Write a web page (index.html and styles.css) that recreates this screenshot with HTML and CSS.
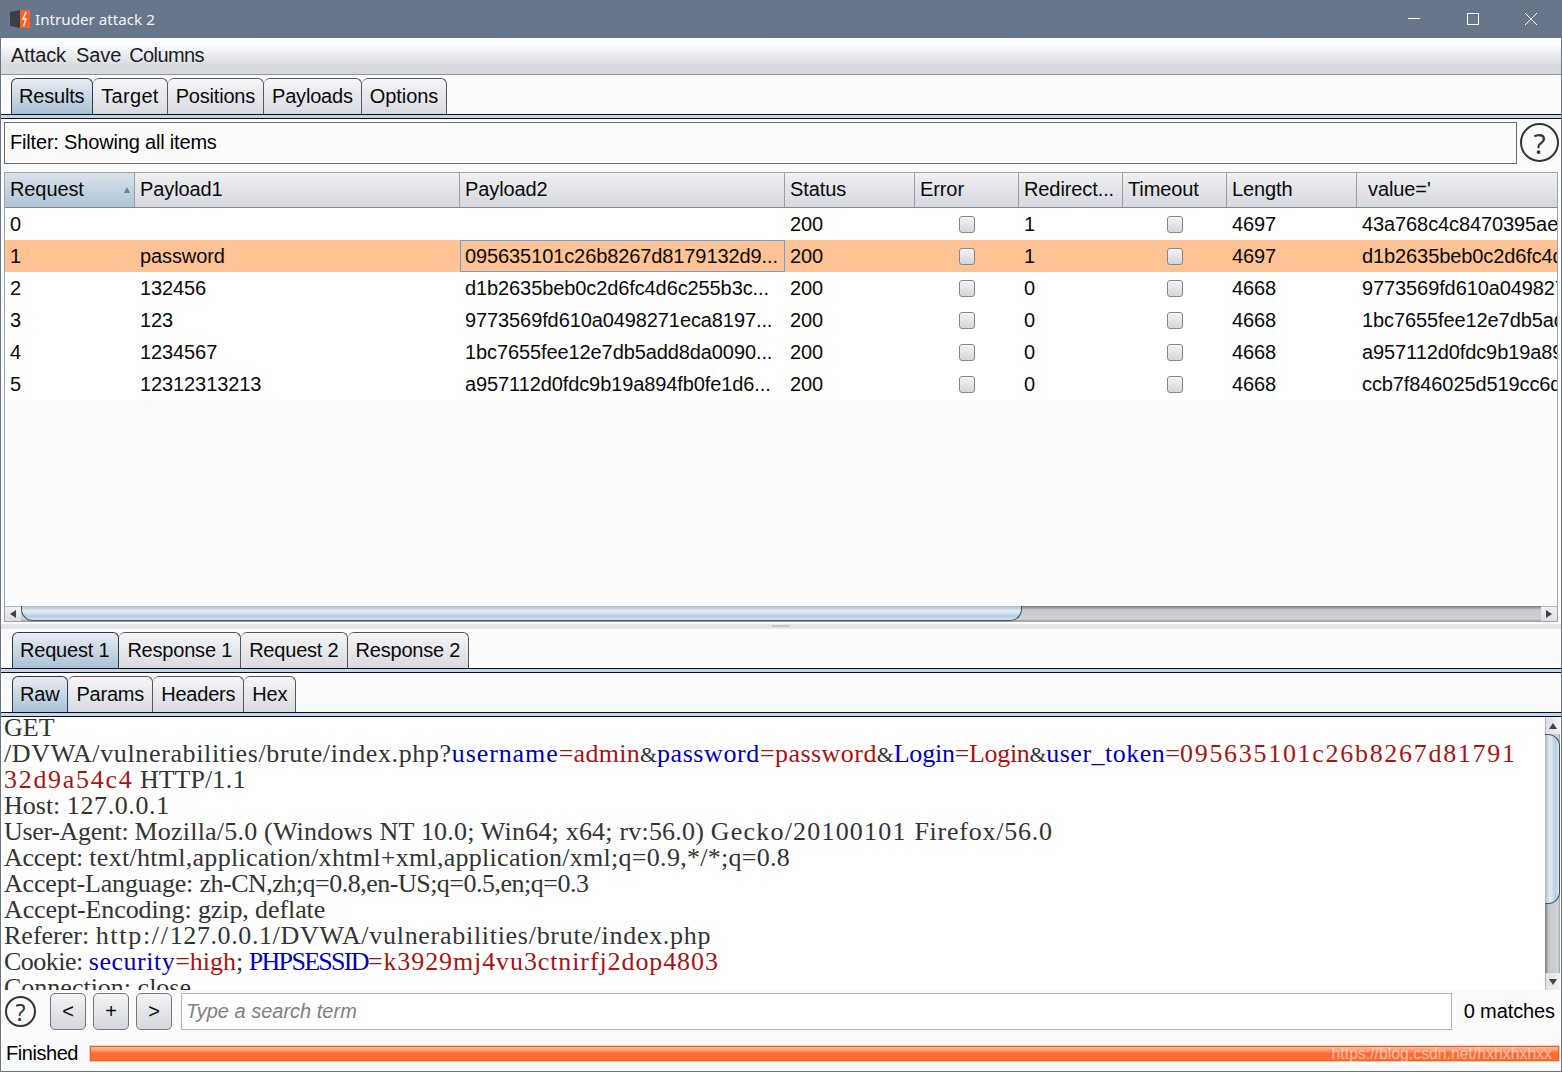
FILE: index.html
```html
<!DOCTYPE html>
<html lang="en">
<head>
<meta charset="utf-8">
<title>Intruder attack 2</title>
<link rel="stylesheet" href="styles.css">
</head>
<body>
<div class="window">
  <header class="titlebar">
    <svg class="logo" width="21" height="20" viewBox="0 0 21 20"><path d="M0 3 L10 1 V19 L0 17Z" fill="#3e3e40"/><path d="M10 1 H20 V19 H10Z" fill="#f4622a"/><path d="M16 3 L13 10 H16 L13.5 17" fill="none" stroke="#fff" stroke-width="1.3"/></svg>
    <span class="title">Intruder attack 2</span>
    <div class="winbtns">
      <svg width="14" height="14" viewBox="0 0 14 14"><path d="M1 6.5 H13" stroke="#fff" fill="none"/></svg>
      <svg width="14" height="14" viewBox="0 0 14 14"><rect x="1.5" y="1.5" width="11" height="11" stroke="#fff" fill="none"/></svg>
      <svg width="14" height="14" viewBox="0 0 14 14"><path d="M1 1 L13 13 M13 1 L1 13" stroke="#fff" fill="none"/></svg>
    </div>
  </header>
  <nav class="menubar"><span>Attack</span><span>Save</span><span class="menu-cols">Columns</span></nav>
  <div class="tabs tabs-main">
    <div class="tab active">Results</div><div class="tab t-target">Target</div><div class="tab">Positions</div><div class="tab">Payloads</div><div class="tab t-options">Options</div>
  </div>
  <div class="tabline"></div>
  <div class="filter-row">
    <div class="filter">Filter: Showing all items</div>
    <div class="help help-lg">?</div>
  </div>
  <section class="table">
    <div class="row head">
      <div class="c c1 sorted">Request<i class="sort"></i></div><div class="c c2">Payload1</div><div class="c c3">Payload2</div><div class="c c4">Status</div><div class="c c5">Error</div><div class="c c6">Redirect...</div><div class="c c7">Timeout</div><div class="c c8">Length</div><div class="c c9 val">value='</div>
    </div>
    <div class="row">
      <div class="c c1">0</div><div class="c c2"></div><div class="c c3"></div><div class="c c4">200</div><div class="c c5 ck"><b></b></div><div class="c c6">1</div><div class="c c7 ck"><b></b></div><div class="c c8">4697</div><div class="c c9">43a768c4c8470395ae</div>
    </div>
    <div class="row sel">
      <div class="c c1">1</div><div class="c c2">password</div><div class="c c3 focus">095635101c26b8267d8179132d9...</div><div class="c c4">200</div><div class="c c5 ck"><b></b></div><div class="c c6">1</div><div class="c c7 ck"><b></b></div><div class="c c8">4697</div><div class="c c9">d1b2635beb0c2d6fc4d6c</div>
    </div>
    <div class="row">
      <div class="c c1">2</div><div class="c c2">132456</div><div class="c c3">d1b2635beb0c2d6fc4d6c255b3c...</div><div class="c c4">200</div><div class="c c5 ck"><b></b></div><div class="c c6">0</div><div class="c c7 ck"><b></b></div><div class="c c8">4668</div><div class="c c9">9773569fd610a0498271</div>
    </div>
    <div class="row">
      <div class="c c1">3</div><div class="c c2">123</div><div class="c c3">9773569fd610a0498271eca8197...</div><div class="c c4">200</div><div class="c c5 ck"><b></b></div><div class="c c6">0</div><div class="c c7 ck"><b></b></div><div class="c c8">4668</div><div class="c c9">1bc7655fee12e7db5add</div>
    </div>
    <div class="row">
      <div class="c c1">4</div><div class="c c2">1234567</div><div class="c c3">1bc7655fee12e7db5add8da0090...</div><div class="c c4">200</div><div class="c c5 ck"><b></b></div><div class="c c6">0</div><div class="c c7 ck"><b></b></div><div class="c c8">4668</div><div class="c c9">a957112d0fdc9b19a894</div>
    </div>
    <div class="row">
      <div class="c c1">5</div><div class="c c2">12312313213</div><div class="c c3">a957112d0fdc9b19a894fb0fe1d6...</div><div class="c c4">200</div><div class="c c5 ck"><b></b></div><div class="c c6">0</div><div class="c c7 ck"><b></b></div><div class="c c8">4668</div><div class="c c9">ccb7f846025d519cc6d2</div>
    </div>
    <div class="table-fill"></div>
    <div class="hscroll">
      <div class="arrow-box"><i class="tri-left"></i></div>
      <div class="htrack"><div class="hthumb"></div></div>
      <div class="arrow-box"><i class="tri-right"></i></div>
    </div>
  </section>
  <div class="splitter"><i></i></div>
  <div class="tabs tabs-req">
    <div class="tab active">Request 1</div><div class="tab">Response 1</div><div class="tab">Request 2</div><div class="tab">Response 2</div>
  </div>
  <div class="tabline"></div>
  <div class="tabs tabs-raw">
    <div class="tab active">Raw</div><div class="tab">Params</div><div class="tab">Headers</div><div class="tab">Hex</div>
  </div>
  <div class="tabline"></div>
  <section class="message">
    <div class="msg-text"><div class="ln">GET</div><div class="ln"><span class="path">/DVWA/vulnerabilities/brute/index.php?</span><span class="k n1">username</span><span class="v n2">=admin</span><span class="amp">&amp;</span><span class="k n3">password</span><span class="v n4">=password</span><span class="amp">&amp;</span><span class="k n5">Login</span><span class="v n6">=Login</span><span class="amp">&amp;</span><span class="k n7">user_token</span><span class="v">=<span class="d">095635101c26b8267d81791</span></span></div><div class="ln"><span class="v d">32d9a54c4</span> HTTP/<span class="ip">1.1</span></div><div class="ln">Host: <span class="ip">127.0.0.1</span></div><div class="ln"><span class="a1">User-Agent: </span><span class="a2">Mozilla/5.0 (Windows NT 10.0; Win64; x64; rv:56.0) </span><span class="a3">Gecko/20100101 </span><span class="a4">Firefox/56.0</span></div><div class="ln"><span class="b1">Accept: </span><span class="b2">text/html,application/xhtml+xml,application/xml;q=0.9,*/*;q=0.8</span></div><div class="ln"><span class="c1t">Accept-Language: </span><span class="c2t">zh-CN,zh;q=0.8,en-US;q=0.5,en;q=0.3</span></div><div class="ln e1">Accept-Encoding: gzip, deflate</div><div class="ln">Referer: <span class="proto">http://</span><span class="ip">127.0.0.1</span><span class="path2">/DVWA/vulnerabilities/brute/index.php</span></div><div class="ln"><span class="f1">Cookie: </span><span class="k f2">security</span><span class="v">=high</span><span class="f1">; </span><span class="k f3">PHPSESSID</span><span class="v f4">=k3929mj4vu3ctnirfj2dop4803</span></div><div class="ln">Connection: close</div></div>
    <div class="vscroll">
      <div class="arrow-box v"><i class="tri-up"></i></div>
      <div class="vtrack"><div class="vthumb"></div></div>
      <div class="arrow-box v"><i class="tri-down"></i></div>
    </div>
  </section>
  <div class="searchbar">
    <div class="help help-sm">?</div>
    <button class="btn">&lt;</button><button class="btn">+</button><button class="btn">&gt;</button>
    <div class="search">Type a search term</div>
    <div class="matches">0 matches</div>
  </div>
  <footer class="status">
    <span class="finished">Finished</span>
    <div class="progress"><span class="wm">https://blog.csdn.net/hxhxhxhxx</span></div>
  </footer>
</div>
</body>
</html>
```
FILE: styles.css
```css
* { box-sizing: border-box; }
html, body { margin: 0; padding: 0; background: #fbfbfc; }
body { font-family: "Liberation Sans", Arial, sans-serif; font-size: 20px; letter-spacing: -.1px; color: #000; overflow: hidden; }
.window { width: 1562px; height: 1072px; display: flex; flex-direction: column; border: 1px solid #67768a; border-top: 0; background: #fbfbfc; overflow: hidden; }

.titlebar { height: 38px; flex: none; margin: 0 -1px; background: #67768a; color: #f2f4f6; display: flex; align-items: center; padding-left: 10px; letter-spacing: 0; }
.logo { flex: none; }
.title { font-family: "Noto Sans", sans-serif; font-size: 15.2px; margin-left: 4px; }
.winbtns { margin-left: auto; display: flex; gap: 44.5px; padding-right: 24px; }

.menubar { height: 37px; flex: none; background: linear-gradient(#fcfcfd 0%, #fcfcfd 20%, #d8dbe0 75%, #d6d9de 100%); border-bottom: 1px solid #8f939a; display: flex; align-items: center; gap: 10px; padding: 0 0 2px 10px; color: #1c1c1c; }
.menu-cols { margin-left: -2px; letter-spacing: -.6px; }

.tabs { display: flex; flex: none; align-items: flex-end; letter-spacing: -.2px; }
.tabs-main { height: 39px; padding-left: 10px; }
.tabs-req { height: 36px; padding-left: 11px; margin-top: 3px; }
.tabs-raw { height: 36px; padding-left: 11px; margin-top: 3px; }
.tab { height: 36px; padding: 0 8px; line-height: 35px; border: 1px solid #54575e; border-bottom: 0; border-left: 0; border-radius: 6px 6px 0 0; background: linear-gradient(#f6f6f8, #d8dae0); white-space: nowrap; color: #0a0a0a; }
.tab:first-child { border-left: 1px solid #54575e; padding-left: 7px; }
.tabs-req .tab:first-child { padding-right: 9px; }
.tab.active { background: linear-gradient(#e9edf2, #a9c2d6); border-color: #2b3a4c; }
.t-target { letter-spacing: .3px; }
.t-options { letter-spacing: -.05px; }

.tabline { height: 5px; flex: none; background: #c4d5e6; border-top: 1px solid #0a0f1c; border-bottom: 1px solid #0a0f1c; }

.filter-row { display: flex; flex: none; height: 45px; padding: 3px 2px 0 3px; gap: 3px; }
.filter { flex: 1; height: 42px; border: 1px solid #6b6b6b; line-height: 38px; padding-left: 5px; letter-spacing: -.18px; }
.help { border: 2px solid #333; border-radius: 50%; display: flex; align-items: center; justify-content: center; color: #333; flex: none; font-family: "Noto Sans", sans-serif; letter-spacing: 0; }
.help-lg { width: 39px; height: 39px; font-size: 28px; margin-top: 1px; }
.help-sm { width: 31px; height: 31px; font-size: 23px; margin-top: 3px; margin-right: 7px; }

.table { height: 450px; margin: 8px 3px 0 3px; border: 1px solid #a0a2a8; flex: none; display: flex; flex-direction: column; background: #fff; overflow: hidden; }
.row { display: flex; height: 32px; flex: none; background: #fff; }
.row.head { height: 35px; background: linear-gradient(#f0f0f3, #d5d8de); border-bottom: 1px solid #85888f; }
.row.sel { background: #ffc295; }
.c { padding-left: 5px; line-height: 32px; white-space: nowrap; overflow: hidden; flex: none; color: #0a0a0a; }
.head .c { border-right: 1px solid #9a9da4; position: relative; }
.head .c:last-child { border-right: 0; }
.sorted { background: linear-gradient(#d9e2ea, #adc4d6); }
.val { padding-left: 11px; }
.c1 { width: 130px; } .c2 { width: 325px; } .c3 { width: 325px; } .c4 { width: 130px; } .c5 { width: 104px; } .c6 { width: 104px; } .c7 { width: 104px; } .c8 { width: 130px; } .c9 { flex: 1; }
.focus { border: 1px solid #6f9fd0; line-height: 30px; padding-left: 4px; }
.sort { position: absolute; right: 4px; top: 14px; border-left: 3.5px solid transparent; border-right: 3.5px solid transparent; border-bottom: 6px solid #5884ad; }
.ck { display: flex; align-items: center; justify-content: center; padding: 0; }
.ck b { display: block; width: 16px; height: 17px; border: 1px solid #85888f; border-radius: 3px; background: linear-gradient(#f4f4f6, #d3d6dc); }
.table-fill { flex: 1; background: #fbfbfc; }
.hscroll { height: 15px; flex: none; display: flex; background: #fbfbfc; }
.arrow-box { width: 16px; height: 100%; flex: none; background: linear-gradient(#f2f2f4, #dcdee2); border-top: 1px solid #aab6c4; display: flex; align-items: center; justify-content: center; }
.htrack { flex: 1; background: linear-gradient(#77797e, #c6c8cd 25%, #cfd1d5 88%, #9a9ca2); }
.hthumb { width: 1001px; height: 100%; background: linear-gradient(#a9b9ca, #e6edf4 35%, #b5cfe5 75%, #dbe8f3); border: 1px solid #3f5164; border-top: 0; border-radius: 0 0 12px 12px; }
.tri-left, .tri-right, .tri-up, .tri-down { display: block; width: 0; height: 0; }
.tri-left { border-top: 4px solid transparent; border-bottom: 4px solid transparent; border-right: 6px solid #444; }
.tri-right { border-top: 4px solid transparent; border-bottom: 4px solid transparent; border-left: 6px solid #444; }
.tri-up { border-left: 4px solid transparent; border-right: 4px solid transparent; border-bottom: 6px solid #444; }
.tri-down { border-left: 4px solid transparent; border-right: 4px solid transparent; border-top: 6px solid #444; }
.splitter { height: 5px; flex: none; margin-top: 2px; background: #e4e5e9; display: flex; justify-content: center; }
.splitter i { width: 18px; height: 2px; margin-top: 1px; background: #c4c6cb; }

.message { height: 273px; flex: none; display: flex; background: #fff; overflow: hidden; }
.msg-text { flex: 1; padding: 0 0 0 3px; font-family: "Liberation Serif", serif; font-size: 26px; letter-spacing: 0; color: #333; min-width: 0; margin-top: -2px; }
.ln { height: 26px; line-height: 26px; white-space: nowrap; }
.k { color: #0000c0; }
.v { color: #a81414; }
.d { letter-spacing: 1.7px; }
.path { letter-spacing: .63px; }
.path2 { letter-spacing: .71px; }
.amp { font-size: 22px; letter-spacing: -.3px; }
.n1 { letter-spacing: .9px; }
.n2 { letter-spacing: .3px; }
.n3 { letter-spacing: .6px; }
.n4 { letter-spacing: .45px; }
.n5 { letter-spacing: -.2px; }
.n6 { letter-spacing: -.35px; }
.n7 { letter-spacing: .5px; }
.ip { letter-spacing: .6px; }
.proto { letter-spacing: 1.7px; }
.a1 { letter-spacing: -.33px; }
.a2 { letter-spacing: .2px; }
.a3 { letter-spacing: 1.2px; }
.a4 { letter-spacing: .75px; }
.b1 { letter-spacing: -.25px; }
.b2 { letter-spacing: .28px; }
.c1t { letter-spacing: -.18px; }
.c2t { letter-spacing: -.5px; }
.e1 { letter-spacing: -.1px; }
.f1 { letter-spacing: -.5px; }
.f2 { letter-spacing: .5px; }
.f3 { letter-spacing: -1.7px; }
.f4 { letter-spacing: .9px; }

.vscroll { width: 15px; flex: none; display: flex; flex-direction: column; background: linear-gradient(90deg, #77797e, #c6c8cd 25%, #cfd1d5 88%, #9a9ca2); margin-right: 1px; }
.arrow-box.v { width: 15px; height: 17px; background: linear-gradient(90deg, #dfe0e3, #f2f2f4); border-top: 0; border-left: 1px solid #aab6c4; }
.vtrack { flex: 1; }
.vthumb { width: 100%; height: 170px; background: linear-gradient(90deg, #a9b9ca, #e6edf4 35%, #b5cfe5 75%, #dbe8f3); border: 1px solid #3f5164; border-left: 0; border-radius: 0 12px 12px 0; }

.searchbar { height: 43px; flex: none; display: flex; align-items: flex-start; gap: 7px; padding: 3px 6px 0 4px; background: #fbfbfc; }
.btn { width: 36px; height: 37px; padding: 0; border: 1px solid #777; border-radius: 5px; background: linear-gradient(#f4f4f6, #d4d7dd); font-family: "Liberation Sans", sans-serif; font-size: 20px; color: #0a0a0a; }
.search { flex: 1; height: 37px; border: 1px solid #b3b3b3; background: #fff; line-height: 34px; padding-left: 4px; font-style: italic; color: #808080; margin-left: 2px; letter-spacing: 0; }
.matches { line-height: 36px; margin-left: 5px; }

.status { height: 38px; flex: none; display: flex; align-items: center; gap: 12px; padding: 0 2px 0 5px; }
.finished { letter-spacing: -.45px; margin-top: 2px; }
.progress { flex: 1; height: 15px; margin-top: 3px; background: linear-gradient(#ffc7ae, #ff6a30 50%, #fb7138); border: 1px solid #ff5a1f; box-shadow: 0 0 0 1px #ffc9b0; position: relative; }
.wm { position: absolute; right: 6px; top: -3px; font-size: 15.8px; letter-spacing: 0; line-height: 20px; color: rgba(255,255,255,.55); white-space: nowrap; }
```
